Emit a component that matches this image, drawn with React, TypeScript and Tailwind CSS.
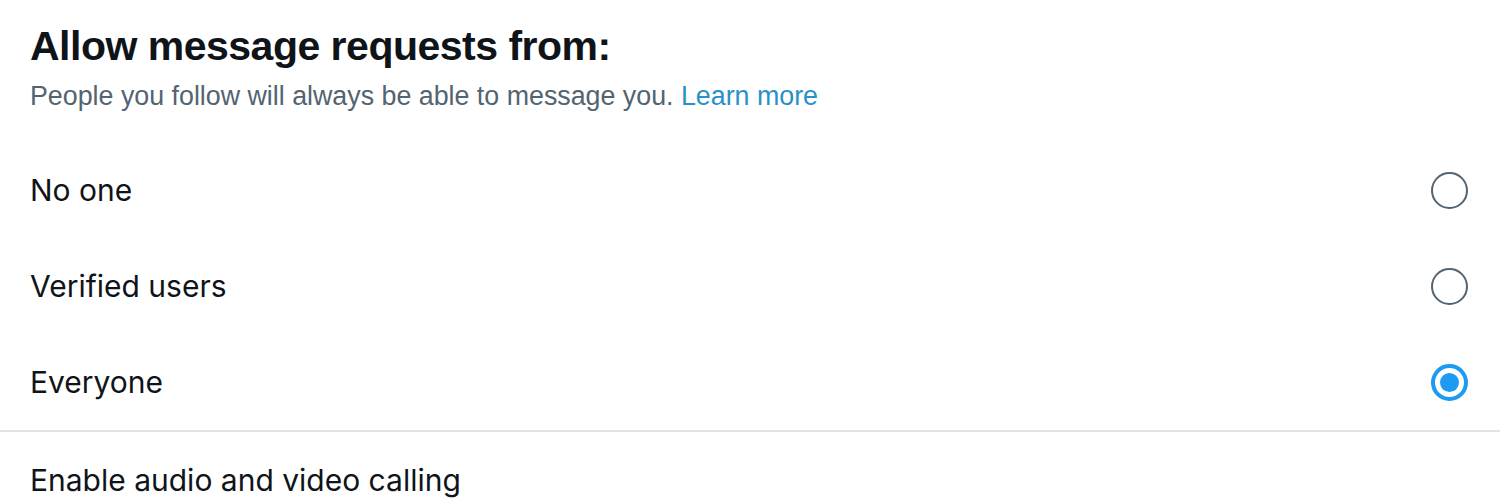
import React from "react";

const options = [
  { label: "No one", checked: false },
  { label: "Verified users", checked: false },
  { label: "Everyone", checked: true },
];

function Radio({ checked }: { checked: boolean }) {
  if (checked) {
    return (
      <div className="flex h-[37px] w-[37px] items-center justify-center rounded-full border-[4px] border-[#1d9bf0]">
        <div className="h-[19px] w-[19px] rounded-full bg-[#1d9bf0]" />
      </div>
    );
  }
  return <div className="h-[37px] w-[37px] rounded-full border-2 border-[#536471]" />;
}

export default function App() {
  return (
    <div className="h-[500px] w-[1500px] overflow-hidden bg-white font-['Liberation_Sans',sans-serif] text-[#0f1419]">
      <div className="h-[142px] px-[30px] pt-[22px]">
        <h2 className="text-[41px] font-bold leading-[48px] tracking-[-0.5px]">Allow message requests from:</h2>
        <p className="mt-[9px] text-[26.8px] leading-[34px] text-[#536471]">
          People you follow will always be able to message you.{" "}
          <a href="#" className="text-[#2a90c8]">Learn more</a>
        </p>
      </div>
      {options.map((o) => (
        <div key={o.label} className="flex h-[96px] items-center justify-between pl-[30px] pr-[32px]">
          <span className="font-['Inter',sans-serif] text-[30px]">{o.label}</span>
          <Radio checked={o.checked} />
        </div>
      ))}
      <div className="h-[2px] bg-[#e1e4e6]" />
      <div className="flex h-[96px] items-center pl-[30px]">
        <span className="font-['Inter',sans-serif] text-[30px]">Enable audio and video calling</span>
      </div>
    </div>
  );
}
